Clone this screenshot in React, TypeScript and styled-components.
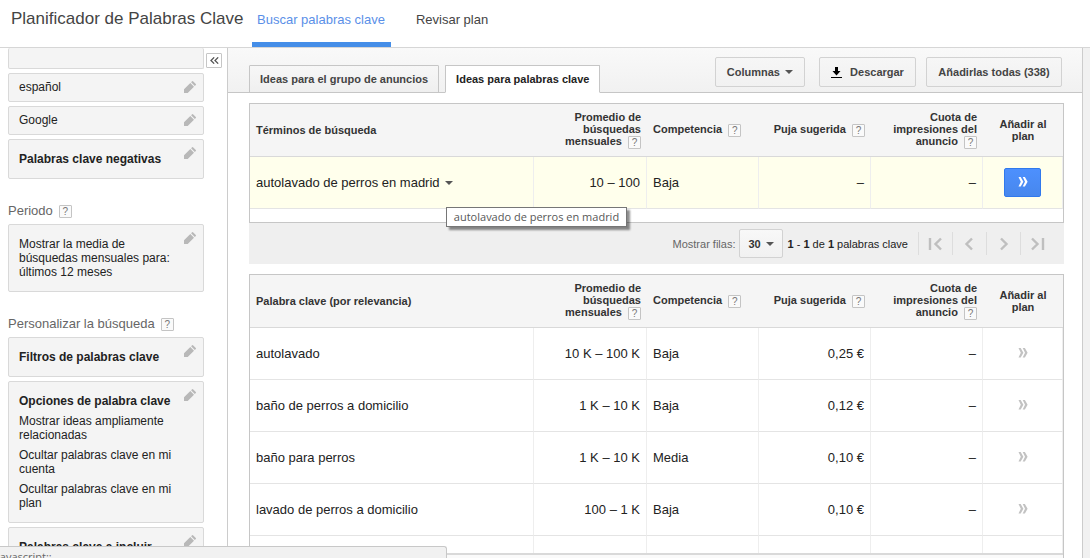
import React from 'react';
import styled, { createGlobalStyle, css } from 'styled-components';

const GlobalStyle = createGlobalStyle`
  * { box-sizing: border-box; }
  html, body { margin: 0; background: #fff; }
  body, button, select {
    font-family: "Liberation Sans", Arial, sans-serif;
    font-size: 13px;
    color: #222;
  }
  button, a { cursor: pointer; }
`;

const Page = styled.div`
  display: flex;
  flex-direction: column;
  height: 100vh;
  overflow: hidden;
`;

const Header = styled.header`
  flex: none;
  display: flex;
  align-items: stretch;
  height: 48px;
  padding-left: 11px;
  border-bottom: 1px solid #d6d6d6;
`;

const Title = styled.h1`
  width: 241px;
  margin: 0;
  padding-top: 9px;
  font-size: 17px;
  line-height: 20px;
  font-weight: normal;
  color: #444;
  white-space: nowrap;
`;

const Nav = styled.nav`
  display: flex;
  gap: 20px;
`;

const NavLink = styled.a<{ $active?: boolean }>`
  padding: 12px 6px 0 5px;
  line-height: 16px;
  text-decoration: none;
  white-space: nowrap;
  color: ${p => (p.$active ? '#5a8fe8' : '#444')};
  border-bottom: 5px solid ${p => (p.$active ? '#458ee8' : 'transparent')};
`;

const Body = styled.div`
  flex: 1;
  display: flex;
  min-height: 0;
`;

const Sidebar = styled.aside`
  flex: none;
  display: flex;
  justify-content: space-between;
  align-items: flex-start;
  width: 228px;
  padding: 0 5px 0 8px;
  border-right: 1px solid #ccc;
  overflow: hidden;
`;

const Options = styled.div`
  width: 196px;
`;

const CollapseButton = styled.button`
  display: flex;
  align-items: center;
  justify-content: center;
  width: 16px;
  height: 15px;
  margin-top: 5px;
  padding: 0;
  border: 1px solid #c6c6c6;
  border-radius: 1px;
  background: #fff;
`;

const Card = styled.section<{ $variant?: 'compact' | 'cut' }>`
  display: flex;
  justify-content: space-between;
  align-items: flex-start;
  margin-bottom: 4px;
  padding: 12px 7px 12px 10px;
  border: 1px solid #d9d9d9;
  border-radius: 2px;
  background: #f4f4f4;
  font-size: 12px;
  line-height: 14px;
  ${p => p.$variant === 'compact' && css`padding-top: 6px; padding-bottom: 7px;`}
  ${p => p.$variant === 'cut' && css`height: 21px; padding: 0; border-top: 0;`}
`;

const CardTitle = styled.h3`
  margin: 0;
  font-size: 12px;
  line-height: 14px;
`;

const CardText = styled.p`
  margin: 0;
  & + & { margin-top: 6px; }
  ${CardTitle} + & { margin-top: 6px; }
`;

const EditButton = styled.button<{ $raised?: boolean }>`
  flex: none;
  display: flex;
  width: 12px;
  height: 12px;
  margin-top: ${p => (p.$raised ? '-5px' : '1px')};
  padding: 0;
  border: 0;
  background: none;
`;

const CardBody = styled.div`
  width: 160px;
`;

const Group = styled.h2`
  display: flex;
  align-items: center;
  gap: 6px;
  margin: 0;
  padding: 20px 0 5px;
  font-size: 13px;
  line-height: 16px;
  font-weight: normal;
  color: #666;
`;

const HelpButton = styled.button`
  width: 13px;
  height: 13px;
  margin: -2px 0;
  padding: 0;
  border: 1px solid #c4c4c4;
  border-radius: 1px;
  background: #fafafa;
  color: #777;
  font-size: 10px;
  line-height: 11px;
  text-align: center;
  vertical-align: -1px;
`;

const Main = styled.main`
  flex: 1;
  min-width: 0;
  overflow: hidden;
`;

const Toolbar = styled.div`
  display: flex;
  justify-content: space-between;
  align-items: flex-end;
  height: 45px;
  padding: 0 20px 0 21px;
  border-bottom: 1px solid #c6c6c6;
  background: linear-gradient(#f9f9f9, #f1f1f1);
`;

const Tabs = styled.div`
  display: flex;
  gap: 6px;
  margin-bottom: -1px;
`;

const Tab = styled.button<{ $active?: boolean }>`
  height: 28px;
  padding: 0 10px;
  border: 1px solid #c6c6c6;
  border-bottom-color: ${p => (p.$active ? '#fff' : '#c6c6c6')};
  border-radius: 1px 1px 0 0;
  background: ${p => (p.$active ? '#fff' : 'linear-gradient(#f7f7f7, #efefef)')};
  color: ${p => (p.$active ? '#222' : '#444')};
  font-size: 11px;
  font-weight: bold;
  white-space: nowrap;
`;

const Actions = styled.div`
  display: flex;
  gap: 10px;
  padding-bottom: 5px;
`;

const ActionButton = styled.button<{ $width: number; $spaced?: boolean }>`
  display: flex;
  align-items: center;
  justify-content: center;
  gap: ${p => (p.$spaced ? '5px' : '8px')};
  min-width: ${p => p.$width}px;
  height: 30px;
  margin-right: ${p => (p.$spaced ? '4px' : '0')};
  padding: 0 11px;
  border: 1px solid #d2d2d2;
  border-radius: 2px;
  background: linear-gradient(#f6f6f6, #f1f1f1);
  color: #444;
  font-size: 11px;
  font-weight: bold;
  white-space: nowrap;
`;

const Content = styled.div`
  display: flex;
  flex-direction: column;
  gap: 10px;
  padding: 10px 18px 0 21px;
`;

const Frame = styled.div<{ $footer?: boolean }>`
  border: 1px solid #c6c6c6;
  padding-bottom: ${p => (p.$footer ? '13px' : '0')};
`;

const Table = styled.table`
  width: 100%;
  table-layout: fixed;
  border-collapse: separate;
  border-spacing: 0;
`;

const HeadCell = styled.th<{ $align?: string; $raised?: boolean }>`
  height: 53px;
  padding: 0 6px;
  padding-bottom: ${p => (p.$raised ? '2px' : '0')};
  border-bottom: 1px solid #d9d9d9;
  background: #f5f5f5;
  color: #333;
  font-size: 11px;
  line-height: 12px;
  text-align: ${p => p.$align || 'left'};
`;

const Cell = styled.td<{ $align?: string }>`
  height: 52px;
  padding: 0 6px;
  border-right: 1px solid #eee;
  border-bottom: 1px solid #e4e4e4;
  text-align: ${p => p.$align || 'left'};
  white-space: nowrap;
`;

const Row = styled.tr<{ $highlight?: boolean }>`
  background: ${p => (p.$highlight ? '#ffffec' : '#fff')};
`;

const Term = styled.span`
  position: relative;
  display: inline-flex;
  align-items: center;
  gap: 5px;
`;

const Tooltip = styled.span`
  position: absolute;
  top: 32px;
  left: 190px;
  z-index: 2;
  width: 181px;
  height: 20px;
  border: 1px solid #767676;
  background: #fff;
  box-shadow: 3px 3px 2px rgba(0, 0, 0, 0.45);
  color: #575757;
  font-family: "Open Sans", "Noto Sans", sans-serif;
  font-size: 11px;
  line-height: 18px;
  text-align: center;
`;

const AddButton = styled.button<{ $primary?: boolean }>`
  display: inline-flex;
  align-items: center;
  justify-content: center;
  width: 37px;
  height: 29px;
  padding: 0 0 1px;
  border: 1px solid ${p => (p.$primary ? '#3079ed' : 'transparent')};
  border-radius: 2px;
  background: ${p => (p.$primary ? 'linear-gradient(#4d90fe, #4787ed)' : 'none')};
  color: ${p => (p.$primary ? '#fff' : '#c2c2c2')};
  vertical-align: middle;
`;

const Pager = styled.div`
  display: flex;
  align-items: center;
  justify-content: flex-end;
  height: 41px;
  padding-right: 10px;
  background: #efefef;
  color: #666;
  font-size: 11px;
  white-space: nowrap;
`;

const RowsLabel = styled.label`
  display: flex;
  align-items: center;
  gap: 4px;
`;

const SelectBox = styled.span`
  display: grid;
  align-items: center;
  width: 44px;
  height: 29px;
  & > * { grid-area: 1 / 1; }
  & > svg { justify-self: end; margin-right: 9px; pointer-events: none; }
`;

const Select = styled.select`
  width: 44px;
  height: 29px;
  padding: 0 0 0 8px;
  appearance: none;
  border: 1px solid #d2d2d2;
  border-radius: 2px;
  background: linear-gradient(#f8f8f8, #f1f1f1);
  color: #333;
  font-size: 11px;
  font-weight: bold;
`;

const Range = styled.span`
  margin: 0 10px 0 4px;
  color: #222;
`;

const PageButton = styled.button`
  display: flex;
  align-items: center;
  justify-content: center;
  width: 34px;
  height: 23px;
  padding: 0;
  border: 0;
  border-left: 1px solid #ddd;
  background: none;
`;

const RightGutter = styled.div`
  flex: none;
  width: 8px;
  border-left: 1px solid #ccc;
  background: #f1f1f1;
`;

const HorizontalScroll = styled.div`
  position: fixed;
  left: 250px;
  right: 27px;
  bottom: 0;
  height: 5px;
  border-top: 2px solid #d9d9d9;
  background: #fafafa;
`;

const StatusBar = styled.div`
  position: fixed;
  left: 0;
  bottom: 0;
  z-index: 3;
  width: 447px;
  height: 12px;
  overflow: hidden;
  border: 1px solid #c8c8c8;
  border-left: 0;
  border-bottom: 0;
  border-radius: 0 3px 0 0;
  background: #f1f1f1;
  color: #666;
  font-family: "Open Sans", "Noto Sans", sans-serif;
  font-size: 11px;
  line-height: 20px;
  text-indent: -3px;
`;

const Caret = () => (
  <svg width="8" height="4" viewBox="0 0 8 4" aria-hidden="true">
    <path d="M0 0h8L4 4z" fill="#555" />
  </svg>
);

const Pencil = () => (
  <svg width="12" height="12" viewBox="0 0 12 12" aria-hidden="true">
    <path
      d="M0 12V8.300L6.300 2 10 5.700 3.700 12zM7.100 1.200l1-1q.4-.4.9 0l2.800 2.800q.4.500 0 .9l-1 1z"
      fill="#b8b8b8"
    />
  </svg>
);

const DoubleLeft = () => (
  <svg width="9" height="7" viewBox="0 0 9 7" aria-hidden="true">
    <path d="M4.200.400 1 3.500l3.200 3.100M8.200.400 5 3.500l3.200 3.100" fill="none" stroke="#555" strokeWidth="1.300" />
  </svg>
);

const DoubleRight = () => (
  <svg width="10" height="10" viewBox="0 0 10 10" aria-hidden="true">
    <path
      d="M.5 0h2.200l2.700 4.800-2.700 4.800H.5l2.300-4.800zM4.700 0h2.200l2.700 4.800-2.700 4.800H4.700L7 4.800z"
      fill="currentColor"
    />
  </svg>
);

const DownloadIcon = () => (
  <svg width="11" height="11" viewBox="0 0 11 11" aria-hidden="true">
    <path d="M4 0h3v4h2.500L5.500 8.500 1.500 4H4zM0 10h11v1H0z" fill="#000" />
  </svg>
);

const pagePaths: Record<string, string> = {
  first: 'M2 1v12M13 1.500 7.500 7l5.500 5.500',
  previous: 'M10 1.500 4.500 7l5.500 5.500',
  next: 'M5 1.500 10.500 7 5 12.500',
  last: 'M2 1.500 7.500 7 2 12.500M13 1v12',
};

const PageIcon = ({ name }: { name: string }) => (
  <svg width="15" height="14" viewBox="0 0 15 14" aria-hidden="true">
    <path d={pagePaths[name]} fill="none" stroke="#bfbfbf" strokeWidth="2.400" />
  </svg>
);

const Help = () => <HelpButton type="button" aria-label="Ayuda">?</HelpButton>;

const Edit = ({ raised }: { raised?: boolean }) => (
  <EditButton type="button" aria-label="Editar" $raised={raised}><Pencil /></EditButton>
);

type KeywordRow = { term: string; searches: string; competition: string; bid: string };

const keywords: KeywordRow[] = [
  { term: 'autolavado', searches: '10 K – 100 K', competition: 'Baja', bid: '0,25 €' },
  { term: 'baño de perros a domicilio', searches: '1 K – 10 K', competition: 'Baja', bid: '0,12 €' },
  { term: 'baño para perros', searches: '1 K – 10 K', competition: 'Media', bid: '0,10 €' },
  { term: 'lavado de perros a domicilio', searches: '100 – 1 K', competition: 'Baja', bid: '0,10 €' },
  { term: '', searches: '', competition: '', bid: '' },
];

const Column = styled.col<{ $width?: number }>`
  width: ${p => (p.$width ? `${p.$width}px` : 'auto')};
`;

const Columns = () => (
  <colgroup>
    <Column />
    <Column $width={113} />
    <Column $width={112} />
    <Column $width={112} />
    <Column $width={112} />
    <Column $width={80} />
  </colgroup>
);

const TableHead = ({ label }: { label: string }) => (
  <thead>
    <tr>
      <HeadCell>{label}</HeadCell>
      <HeadCell $align="right" $raised>Promedio de búsquedas mensuales&nbsp; <Help /></HeadCell>
      <HeadCell $raised>Competencia&nbsp; <Help /></HeadCell>
      <HeadCell $align="right" $raised>Puja sugerida&nbsp; <Help /></HeadCell>
      <HeadCell $align="right" $raised>Cuota de impresiones del anuncio&nbsp; <Help /></HeadCell>
      <HeadCell $align="center">Añadir al<br />plan</HeadCell>
    </tr>
  </thead>
);

export default function App() {
  return (
    <Page>
      <GlobalStyle />
      <Header>
        <Title>Planificador de Palabras Clave</Title>
        <Nav>
          <NavLink href="#buscar" $active>Buscar palabras clave</NavLink>
          <NavLink href="#plan">Revisar plan</NavLink>
        </Nav>
      </Header>
      <Body>
        <Sidebar>
          <Options>
            <Card $variant="cut" />
            <Card $variant="compact"><CardBody>español</CardBody><Edit /></Card>
            <Card $variant="compact"><CardBody>Google</CardBody><Edit /></Card>
            <Card><CardTitle>Palabras clave negativas</CardTitle><Edit raised /></Card>
            <Group>Periodo <Help /></Group>
            <Card>
              <CardBody>
                <CardText>Mostrar la media de búsquedas mensuales para: últimos 12 meses</CardText>
              </CardBody>
              <Edit raised />
            </Card>
            <Group>Personalizar la búsqueda <Help /></Group>
            <Card><CardTitle>Filtros de palabras clave</CardTitle><Edit raised /></Card>
            <Card>
              <CardBody>
                <CardTitle>Opciones de palabra clave</CardTitle>
                <CardText>Mostrar ideas ampliamente relacionadas</CardText>
                <CardText>Ocultar palabras clave en mi cuenta</CardText>
                <CardText>Ocultar palabras clave en mi plan</CardText>
              </CardBody>
              <Edit raised />
            </Card>
            <Card><CardTitle>Palabras clave a incluir</CardTitle><Edit raised /></Card>
          </Options>
          <CollapseButton type="button" aria-label="Ocultar panel"><DoubleLeft /></CollapseButton>
        </Sidebar>
        <Main>
          <Toolbar>
            <Tabs role="tablist">
              <Tab type="button" role="tab">Ideas para el grupo de anuncios</Tab>
              <Tab type="button" role="tab" aria-selected="true" $active>Ideas para palabras clave</Tab>
            </Tabs>
            <Actions>
              <ActionButton type="button" $width={90} $spaced>Columnas <Caret /></ActionButton>
              <ActionButton type="button" $width={97}><DownloadIcon /> Descargar</ActionButton>
              <ActionButton type="button" $width={136}>Añadirlas todas (338)</ActionButton>
            </Actions>
          </Toolbar>
          <Content>
            <div>
              <Frame $footer>
                <Table>
                  <Columns />
                  <TableHead label="Términos de búsqueda" />
                  <tbody>
                    <Row $highlight>
                      <Cell>
                        <Term>
                          autolavado de perros en madrid <Caret />
                          <Tooltip role="tooltip">autolavado de perros en madrid</Tooltip>
                        </Term>
                      </Cell>
                      <Cell $align="right">10 – 100</Cell>
                      <Cell>Baja</Cell>
                      <Cell $align="right">–</Cell>
                      <Cell $align="right">–</Cell>
                      <Cell $align="center">
                        <AddButton type="button" $primary aria-label="Añadir"><DoubleRight /></AddButton>
                      </Cell>
                    </Row>
                  </tbody>
                </Table>
              </Frame>
              <Pager>
                <RowsLabel>
                  Mostrar filas:
                  <SelectBox>
                    <Select defaultValue="30"><option>30</option></Select>
                    <Caret />
                  </SelectBox>
                </RowsLabel>
                <Range><b>1</b> - <b>1</b> de <b>1</b> palabras clave</Range>
                <PageButton type="button" aria-label="Primera"><PageIcon name="first" /></PageButton>
                <PageButton type="button" aria-label="Anterior"><PageIcon name="previous" /></PageButton>
                <PageButton type="button" aria-label="Siguiente"><PageIcon name="next" /></PageButton>
                <PageButton type="button" aria-label="Última"><PageIcon name="last" /></PageButton>
              </Pager>
            </div>
            <Frame>
              <Table>
                <Columns />
                <TableHead label="Palabra clave (por relevancia)" />
                <tbody>
                  {keywords.map((row, i) => (
                    <Row key={i}>
                      <Cell>{row.term}</Cell>
                      <Cell $align="right">{row.searches}</Cell>
                      <Cell>{row.competition}</Cell>
                      <Cell $align="right">{row.bid}</Cell>
                      <Cell $align="right">{row.term && '–'}</Cell>
                      <Cell $align="center">
                        {row.term && <AddButton type="button" aria-label="Añadir"><DoubleRight /></AddButton>}
                      </Cell>
                    </Row>
                  ))}
                </tbody>
              </Table>
            </Frame>
          </Content>
        </Main>
        <RightGutter />
      </Body>
      <HorizontalScroll />
      <StatusBar>javascript:;</StatusBar>
    </Page>
  );
}
